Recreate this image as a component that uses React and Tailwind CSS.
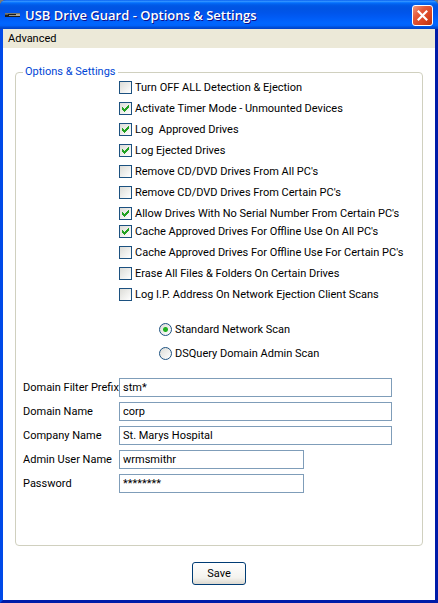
import React, { useState } from 'react';

const initialOptions = [
  { id: 'off', label: 'Turn OFF ALL Detection & Ejection', checked: false },
  { id: 'timer', label: 'Activate Timer Mode - Unmounted Devices', checked: true },
  { id: 'logApproved', label: 'Log  Approved Drives', checked: true },
  { id: 'logEjected', label: 'Log Ejected Drives', checked: true },
  { id: 'removeAll', label: "Remove CD/DVD Drives From All PC's", checked: false },
  { id: 'removeCertain', label: "Remove CD/DVD Drives From Certain PC's", checked: false },
  { id: 'noSerial', label: "Allow Drives With No Serial Number From Certain PC's", checked: true },
  { id: 'cacheAll', label: "Cache Approved Drives For Offline Use On All PC's", checked: true },
  { id: 'cacheCertain', label: "Cache Approved Drives For Offline Use For Certain PC's", checked: false },
  { id: 'erase', label: 'Erase All Files & Folders On Certain Drives', checked: false },
  { id: 'logIp', label: 'Log I.P. Address On Network Ejection Client Scans', checked: false }
];

const scanModes = [
  { value: 'standard', label: 'Standard Network Scan' },
  { value: 'dsquery', label: 'DSQuery Domain Admin Scan' }
];

const fields = [
  { id: 'prefix', label: 'Domain Filter Prefix', value: 'stm*', wide: true },
  { id: 'domain', label: 'Domain Name', value: 'corp', wide: true },
  { id: 'company', label: 'Company Name', value: 'St. Marys Hospital', wide: true },
  { id: 'user', label: 'Admin User Name', value: 'wrmsmithr', wide: false },
  { id: 'password', label: 'Password', value: '********', wide: false }
];

const DriveIcon = () => (
  <svg width="16" height="16" viewBox="0 0 16 16" shapeRendering="crispEdges" aria-hidden="true">
    <rect x="0" y="6" width="15" height="4" fill="#1c1c1a" />
    <rect x="0" y="6" width="15" height="1" fill="#77776f" />
    <rect x="0" y="7" width="3" height="1" fill="#5c5c55" />
    <rect x="4" y="8" width="7" height="1" fill="#96968e" />
    <rect x="11" y="7" width="4" height="2" fill="#a8a8a0" />
  </svg>
);

const TitleBar = () => (
  <header className="flex h-[29px] items-center rounded-t-md bg-[linear-gradient(to_bottom,#0058ee_0%,#3593ff_4%,#288eff_6%,#127dff_8%,#036ffc_10%,#0262ee_14%,#0057e5_20%,#0054e3_30%,#0055eb_45%,#005bf5_60%,#0066ff_80%,#0062fa_88%,#004fd8_94%,#0042c8_100%)] px-[5px] pt-px">
    <DriveIcon />
    <h1 className="flex-1 pl-1 font-['Open_Sans',sans-serif] text-[13px] font-semibold leading-4 text-white [text-shadow:1px_1px_0_#0f1089]">
      USB Drive Guard - Options &amp; Settings
    </h1>
    <button
      type="button"
      aria-label="Close"
      className="flex size-[21px] items-center justify-center rounded-[3px] border border-white bg-[linear-gradient(135deg,#ef9a80_0%,#e4593a_35%,#d8431f_70%,#b83210_100%)]"
    >
      <svg width="11" height="11" viewBox="0 0 11 11" fill="none" stroke="#fff" strokeWidth="2.2" aria-hidden="true">
        <path d="M0.8 0.8 10.2 10.2M10.2 0.8 0.8 10.2" />
      </svg>
    </button>
  </header>
);

const CheckOption = ({ option, onToggle }) => (
  <label className="flex h-[13px] items-center gap-[3px] whitespace-pre leading-4">
    <span className="grid size-[13px] shrink-0 place-items-center">
      <input
        type="checkbox"
        checked={option.checked}
        onChange={() => onToggle(option.id)}
        className="peer col-start-1 row-start-1 size-[13px] appearance-none border border-[#1c5180] bg-[linear-gradient(135deg,#dcdcd7,#ffffff)]"
      />
      <svg
        width="7"
        height="7"
        viewBox="0 0 7 7"
        shapeRendering="crispEdges"
        className="pointer-events-none invisible col-start-1 row-start-1 fill-[#21a121] peer-checked:visible"
      >
        <path d="M0 2h1v1h1v1h1v-1h1v-1h1v-1h1v-1h1v3h-1v1h-1v1h-1v1h-1v1h-1v-1h-1v-1h-1z" />
      </svg>
    </span>
    {option.label}
  </label>
);

const App = () => {
  const [options, setOptions] = useState(initialOptions);
  const [scanMode, setScanMode] = useState('standard');
  const [values, setValues] = useState(
    Object.fromEntries(fields.map((field) => [field.id, field.value]))
  );

  const toggleOption = (id) => {
    setOptions(options.map((o) => (o.id === id ? { ...o, checked: !o.checked } : o)));
  };

  const renderOptions = (list) =>
    list.map((option) => <CheckOption key={option.id} option={option} onToggle={toggleOption} />);

  return (
    <div className="bg-[#7b7b73]">
      <div className="flex min-h-screen flex-col rounded-t-md bg-[#0831d9] font-[Roboto,sans-serif] text-[11px] leading-[14px] text-black">
        <TitleBar />
        <div className="flex flex-1 flex-col border-x-[3px] border-b-[3px] border-l-[#0049e8] border-r-[#001ca8] border-b-[#001ca8] bg-white">
          <nav className="flex h-[19px] items-center bg-[#ece9d8] pl-[5px]">
            <button type="button">Advanced</button>
          </nav>

          <form className="flex flex-1 flex-col px-3 pb-[15px] pt-[17px]" onSubmit={(e) => e.preventDefault()}>
            <fieldset className="min-w-0 flex-1 rounded-[4px] border border-[#d0d0bf] pl-[7px] pr-[30px]">
              <legend className="px-[2px] text-[#0046d5]">Options &amp; Settings</legend>

              <div className="flex flex-col gap-[5px] pl-24 pt-[2px]">
                <div className="flex flex-col gap-2">{renderOptions(options.slice(0, 7))}</div>
                <div className="flex flex-col gap-2">{renderOptions(options.slice(7))}</div>
              </div>

              {/* Scan mode */}
              <div className="flex flex-col gap-[11px] pl-[136px] pt-[22px]">
                {scanModes.map((mode) => (
                  <label key={mode.value} className="flex h-[13px] items-center gap-[3px] leading-4">
                    <input
                      type="radio"
                      name="scanMode"
                      value={mode.value}
                      checked={scanMode === mode.value}
                      onChange={() => setScanMode(mode.value)}
                      className="size-[13px] appearance-none rounded-full border border-[#1c5180] bg-[linear-gradient(135deg,#dcdcd7,#ffffff)] checked:bg-[radial-gradient(circle,#21b121_0_2px,transparent_3px),linear-gradient(135deg,#dcdcd7,#ffffff)]"
                    />
                    {mode.label}
                  </label>
                ))}
              </div>

              {/* Domain settings */}
              <div className="flex flex-col gap-[5px] pt-[18px]">
                {fields.map((field) => (
                  <div key={field.id} className="flex items-center">
                    <label htmlFor={field.id} className="w-24 shrink-0 whitespace-nowrap">
                      {field.label}
                    </label>
                    <input
                      id={field.id}
                      type="text"
                      value={values[field.id]}
                      onChange={(e) => setValues({ ...values, [field.id]: e.target.value })}
                      className={`h-[19px] border border-[#7f9db9] bg-white px-[3px] outline-none ${
                        field.wide ? 'min-w-0 flex-1' : 'w-[185px]'
                      }`}
                    />
                  </div>
                ))}
              </div>
            </fieldset>

            <button
              type="submit"
              className="mt-4 h-[23px] w-[54px] self-center rounded-[3px] border border-[#003c74] bg-[linear-gradient(to_bottom,#ffffff,#f4f3ee_70%,#dcd8cf)]"
            >
              Save
            </button>
          </form>
        </div>
      </div>
    </div>
  );
};

export default App;
